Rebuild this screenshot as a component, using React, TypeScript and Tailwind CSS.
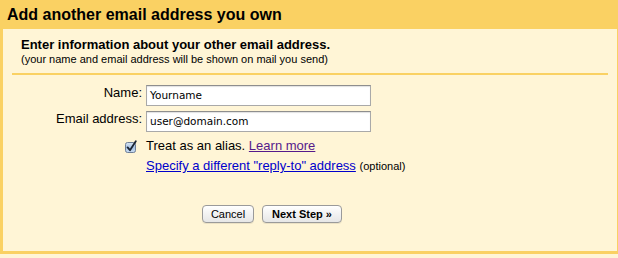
import React from 'react';

function Checkbox() {
  return (
    <svg width="14" height="14" viewBox="0 0 14 14" className="block">
      <defs>
        <linearGradient id="cbg" x1="0" y1="0" x2="0" y2="1">
          <stop offset="0" stopColor="#dbe7f5" />
          <stop offset="0.5" stopColor="#a9c4e4" />
          <stop offset="1" stopColor="#c9dcf2" />
        </linearGradient>
      </defs>
      <rect x="1.5" y="2.5" width="10" height="10" rx="2" fill="url(#cbg)" stroke="#6f7f97" strokeWidth="1" />
      <path d="M3.6 7.4 L6 10.2 L11.8 1.2" fill="none" stroke="#1c2432" strokeWidth="1.8" strokeLinecap="round" strokeLinejoin="round" />
    </svg>
  );
}

export default function App() {
  return (
    <div className="w-[618px] h-[258px] bg-[#fff5d6] font-['Liberation_Sans',Arial,sans-serif] text-black">
      {/* Header */}
      <div className="h-[29px] bg-[#fad163] pl-[7px] flex items-center">
        <h1 className="text-[16px] font-bold leading-[16px] pt-[1px]">Add another email address you own</h1>
      </div>

      {/* Box */}
      <div className="h-[225px] border-l-[3px] border-r border-b-[3px] border-[#fad163] pl-[9px] pt-[8px]">
        <div className="pl-[9px]">
          <p className="text-[13px] font-bold leading-[16px]">Enter information about your other email address.</p>
          <p className="text-[11px] leading-[13px]">(your name and email address will be shown on mail you send)</p>
        </div>
        <div className="mt-[7px] h-[2px] w-[596px] bg-[#fad163]" />

        {/* Form */}
        <div className="mt-[10px] flex flex-col gap-[5px]">
          <div className="flex items-start gap-[4px]">
            <label className="w-[130px] text-right text-[13px] leading-[16px]">Name:</label>
            <div className="w-[225px] h-[21px] border border-[#a9a9a9] border-t-[#8e8e8e] bg-white shadow-[inset_0_1px_1px_rgba(0,0,0,0.12)] pl-[3px] flex items-center font-['DejaVu_Sans',sans-serif] text-[10.5px]">
              Yourname
            </div>
          </div>
          <div className="flex items-start gap-[4px]">
            <label className="w-[130px] text-right text-[13px] leading-[16px]">Email address:</label>
            <div className="w-[225px] h-[21px] border border-[#a9a9a9] border-t-[#8e8e8e] bg-white shadow-[inset_0_1px_1px_rgba(0,0,0,0.12)] pl-[3px] flex items-center font-['DejaVu_Sans',sans-serif] text-[10.5px]">
              user@domain.com
            </div>
          </div>
        </div>

        <div className="mt-[6px] flex items-start">
          <div className="w-[134px] flex justify-end pr-[8px] pt-[2px]">
            <Checkbox />
          </div>
          <span className="text-[13px] leading-[16px]">
            Treat as an alias. <a className="text-[#551a8b] underline">Learn more</a>
          </span>
        </div>

        <div className="mt-[4px] pl-[134px] text-[13px] leading-[16px]">
          <a className="text-[#0000cc] underline">Specify a different "reply-to" address</a>{' '}
          <span className="text-[11px]">(optional)</span>
        </div>

        <div className="mt-[31px] pl-[190px] flex gap-[8px]">
          <button className="w-[52px] h-[18px] rounded-[4px] border border-[#9a9a9a] bg-gradient-to-b from-white to-[#e6e6e6] text-[11px] leading-none shadow-[0_1px_0_rgba(0,0,0,0.08)]">
            Cancel
          </button>
          <button className="w-[80px] h-[18px] rounded-[4px] border border-[#9a9a9a] bg-gradient-to-b from-white to-[#e6e6e6] text-[11px] font-bold leading-none shadow-[0_1px_0_rgba(0,0,0,0.08)]">
            Next Step »
          </button>
        </div>
      </div>
    </div>
  );
}
